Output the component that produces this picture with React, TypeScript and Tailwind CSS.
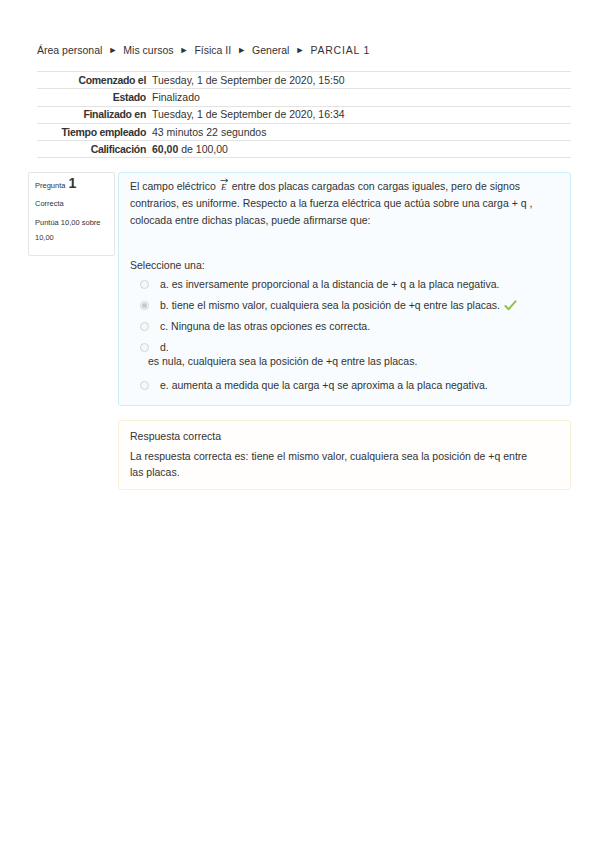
import React from 'react'

const rows: [string, React.ReactNode][] = [
  ['Comenzado el', 'Tuesday, 1 de September de 2020, 15:50'],
  ['Estado', 'Finalizado'],
  ['Finalizado en', 'Tuesday, 1 de September de 2020, 16:34'],
  ['Tiempo empleado', '43 minutos 22 segundos'],
  ['Calificación', <><b>60,00</b> de 100,00</>],
]

const crumbs = ['Área personal', 'Mis cursos', 'Física II', 'General', 'PARCIAL 1']

function Radio({ checked }: { checked?: boolean }) {
  return (
    <span className="w-[9px] h-[9px] rounded-full border border-[#d4d4d4] bg-[#f7f7f7] flex items-center justify-center shrink-0">
      {checked && <span className="w-[5px] h-[5px] rounded-full bg-[#c8c8c8]" />}
    </span>
  )
}

function Option({ children, checked, tick }: { children: React.ReactNode; checked?: boolean; tick?: boolean }) {
  return (
    <div className="flex items-center h-[21px] pl-[10px]">
      <Radio checked={checked} />
      <span className="ml-[11px]">{children}</span>
      {tick && (
        <svg width="13" height="11" viewBox="0 0 14 12" className="ml-[4px]">
          <path d="M1.5 6.5 L5 10 L12.5 1.5" fill="none" stroke="#8cc63f" strokeWidth="2.2" strokeLinecap="round" strokeLinejoin="round" />
        </svg>
      )}
    </div>
  )
}

export default function App() {
  return (
    <div className="w-[599px] h-[848px] bg-white text-[#333] text-[10.5px] leading-[17px]" style={{ fontFamily: '"Liberation Sans", Arial, sans-serif' }}>
      <div className="pt-[42px] pl-[37px] flex items-center">
        {crumbs.map((c, i) => (
          <React.Fragment key={c}>
            {i > 0 && <span className="mx-[6px] text-[9px]">►</span>}
            <span className={i === crumbs.length - 1 ? 'tracking-[0.8px]' : ''}>{c}</span>
          </React.Fragment>
        ))}
      </div>

      <div className="mt-[12px] ml-[37px] w-[534px] border-t border-[#e3e3e3]">
        {rows.map(([label, value]) => (
          <div key={label} className="flex border-b border-[#e3e3e3] h-[17.3px] items-center">
            <div className="w-[109px] text-right font-bold tracking-[-0.3px]">{label}</div>
            <div className="ml-[6px]">{value}</div>
          </div>
        ))}
      </div>

      <div className="flex mt-[14px] ml-[28px]">
        <div className="w-[87px] h-[84px] border border-[#e5e5e5] rounded-[2px] px-[6px] pt-[3px] text-[7.5px] leading-[15px] self-start">
          <div className="flex items-baseline gap-[3px]">
            <span>Pregunta</span>
            <span className="text-[14px] font-bold">1</span>
          </div>
          <div className="mt-[3px]">Correcta</div>
          <div className="mt-[4px]">Puntúa 10,00 sobre</div>
          <div>10,00</div>
        </div>

        <div className="ml-[3px] w-[453px] flex flex-col gap-[14px]">
          <div className="h-[234px] border border-[#cdeef8] bg-[#f8fcfe] rounded-[3px] px-[11px] pt-[5px]">
            <div className="w-[420px]">
              El campo eléctrico{' '}
              <span className="relative inline-block w-[10px] text-center italic text-[9px] leading-[9px]" style={{ fontFamily: '"Liberation Serif", serif' }}>
                <svg width="9" height="5" viewBox="0 0 9 5" className="absolute left-[1px] -top-[5px]">
                  <path d="M0.5 2.5 H7.5 M5.5 0.8 L8 2.5 L5.5 4.2" fill="none" stroke="#333" strokeWidth="0.8" />
                </svg>
                E
              </span>{' '}
              entre dos placas cargadas con cargas iguales, pero de signos contrarios, es uniforme. Respecto a la fuerza eléctrica que actúa sobre una carga + q , colocada entre dichas placas, puede afirmarse que:
            </div>
            <div className="mt-[28px]">Seleccione una:</div>
            <Option>a. es inversamente proporcional a la distancia de + q a la placa negativa.</Option>
            <Option checked tick>b. tiene el mismo valor, cualquiera sea la posición de +q entre las placas.</Option>
            <Option>c. Ninguna de las otras opciones es correcta.</Option>
            <Option>d.</Option>
            <div className="pl-[18px] -mt-[5px]">es nula, cualquiera sea la posición de +q entre las placas.</div>
            <div className="mt-[5px]">
              <Option>e. aumenta a medida que la carga +q se aproxima a la placa negativa.</Option>
            </div>
          </div>

          <div className="h-[70px] border border-[#fcefd9] bg-[#fffefc] rounded-[3px] px-[11px] pt-[7px]">
            <div>Respuesta correcta</div>
            <div className="mt-[3px] w-[412px] leading-[16px]">
              La respuesta correcta es: tiene el mismo valor, cualquiera sea la posición de +q entre las placas.
            </div>
          </div>
        </div>
      </div>
    </div>
  )
}
